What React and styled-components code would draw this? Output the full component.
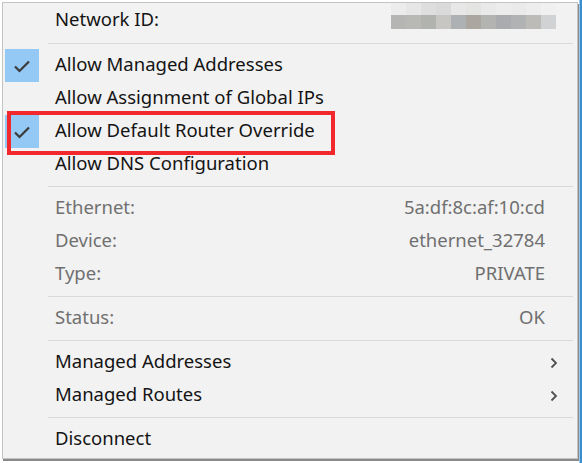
import React from "react";
import styled, { createGlobalStyle } from "styled-components";

const GlobalStyle = createGlobalStyle`
  html, body {
    margin: 0;
    padding: 0;
    background: #ffffff;
  }
  body {
    font-family: "Noto Sans", "Open Sans", sans-serif;
    overflow: hidden;
  }
`;

const Screen = styled.div`
  width: 582px;
  height: 463px;
  padding: 2px 0 0 2px;
  box-sizing: border-box;
  background: linear-gradient(90deg, #ffffff 0, #ffffff 579px, #3a8fd0 580px);
`;

const Menu = styled.div`
  width: 576px;
  box-sizing: border-box;
  background: #f2f2f2;
  border: 1px solid #c4c4c4;
  padding: 0 0 2px 0;
  box-shadow: 1px 2px 0 #8a8a8a;
`;

const HeaderRow = styled.div`
  height: 35px;
  display: flex;
  align-items: center;
  position: relative;
  padding-left: 52px;
  color: #141414;
  font-size: 18.5px;
  line-height: 1;
`;

const Mosaic = styled.div`
  margin-left: auto;
  margin-right: 21px;
  align-self: flex-start;
  display: grid;
  grid-template-columns: repeat(11, 15px);
  grid-template-rows: 12px 14px;
`;

const Cell = styled.div`
  background: ${(p) => p.$c};
`;

const Separator = styled.div`
  height: 1px;
  background: #d9d9d9;
  margin: 5px 4px 5px 45px;
`;

const Row = styled.div`
  height: 33px;
  display: flex;
  align-items: center;
  position: relative;
  font-size: 18.5px;
  line-height: 1;
  color: ${(p) => (p.$muted ? "#707070" : "#141414")};
`;

const CheckCell = styled.div`
  width: 34px;
  height: 33px;
  margin-left: 2px;
  margin-right: 16px;
  display: flex;
  align-items: center;
  justify-content: center;
  background: ${(p) => (p.$checked ? "#94c8f5" : "transparent")};
`;

const Label = styled.span`
  flex: 1;
  white-space: nowrap;
  margin-top: -2px;
`;

const Value = styled.span`
  margin-right: 32px;
  margin-top: -2px;
  white-space: nowrap;
`;

const Arrow = styled.span`
  margin-right: 19px;
  display: flex;
  align-items: center;
`;

const Highlight = styled.div`
  position: absolute;
  left: 4px;
  top: -4px;
  width: 328px;
  height: 44px;
  box-sizing: border-box;
  border: 4px solid #f2282d;
  pointer-events: none;
`;

const Check = () => (
  <svg width="18" height="14" viewBox="0 0 18 14">
    <path d="M2 7.5 L6.5 12 L16 2.5" fill="none" stroke="#3c3c3c" strokeWidth="2.2" />
  </svg>
);

const Chevron = () => (
  <svg width="8" height="12" viewBox="0 0 8 12">
    <path d="M1.5 1.5 L6 6 L1.5 10.5" fill="none" stroke="#505050" strokeWidth="1.8" />
  </svg>
);

const topCells = ["#ececec", "#e6e6e6", "#dedede", "#dadada", "#e7e7e8", "#e4e4e2", "#e9e9e9", "#ececec", "#eaeaea", "#ededed", "#f0f0f0"];
const bottomCells = ["#b5b5b3", "#b8b8b5", "#b0b3ae", "#c8c6c3", "#adb1b3", "#aba6a0", "#b3b3b1", "#a9abae", "#b0b2b4", "#bcbbb8", "#d0d2d4"];

const options = [
  { label: "Allow Managed Addresses", checked: true },
  { label: "Allow Assignment of Global IPs" },
  { label: "Allow Default Router Override", checked: true, marked: true },
  { label: "Allow DNS Configuration" },
];

const details = [
  { label: "Ethernet:", value: "5a:df:8c:af:10:cd" },
  { label: "Device:", value: "ethernet_32784" },
  { label: "Type:", value: "PRIVATE" },
];

const App = () => {
  return (
    <Screen>
      <GlobalStyle />
      <Menu>
        <HeaderRow>
          <Label>Network ID:</Label>
          <Mosaic>
            {topCells.map((c, i) => (
              <Cell key={"t" + i} $c={c} />
            ))}
            {bottomCells.map((c, i) => (
              <Cell key={"b" + i} $c={c} />
            ))}
          </Mosaic>
        </HeaderRow>
        <Separator />

        {options.map((o) => (
          <Row key={o.label}>
            <CheckCell $checked={o.checked}>{o.checked && <Check />}</CheckCell>
            <Label>{o.label}</Label>
            {o.marked && <Highlight />}
          </Row>
        ))}
        <Separator />

        {details.map((d) => (
          <Row key={d.label} $muted>
            <CheckCell />
            <Label>{d.label}</Label>
            <Value>{d.value}</Value>
          </Row>
        ))}
        <Separator />

        <Row $muted>
          <CheckCell />
          <Label>Status:</Label>
          <Value>OK</Value>
        </Row>
        <Separator />

        <Row>
          <CheckCell />
          <Label>Managed Addresses</Label>
          <Arrow>
            <Chevron />
          </Arrow>
        </Row>
        <Row>
          <CheckCell />
          <Label>Managed Routes</Label>
          <Arrow>
            <Chevron />
          </Arrow>
        </Row>
        <Separator />

        <Row>
          <CheckCell />
          <Label>Disconnect</Label>
        </Row>
      </Menu>
    </Screen>
  );
};

export default App;
